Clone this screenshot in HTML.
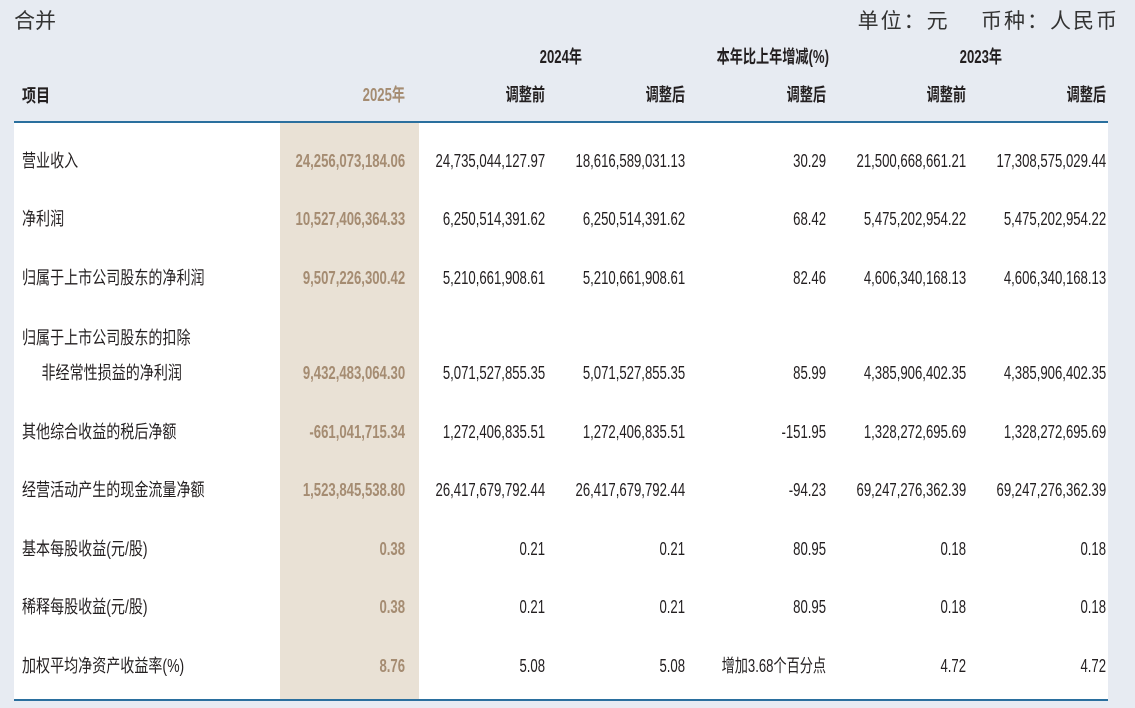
<!DOCTYPE html>
<html><head><meta charset="utf-8"><style>
body{margin:0;width:1135px;height:708px;overflow:hidden;background:#e7ebf2;font-family:"Liberation Sans","Noto Sans CJK SC",sans-serif;color:#231f20;position:relative}
.t{position:absolute;white-space:nowrap;font-size:18px;line-height:20px}
.r{transform:scaleX(0.73);transform-origin:right center;text-align:right}
.l{transform:scaleX(0.78);transform-origin:left center}
.h{font-weight:bold;font-size:18px}
.g{color:#a58c72;font-weight:bold}
</style></head><body>
<div class="t" style="left:14px;top:10px;font-size:21px;line-height:24px;color:#333">合并</div>
<div class="t" style="right:16px;top:10px;font-size:21px;line-height:24px;color:#333;letter-spacing:2px">单位：元&nbsp;&nbsp;&nbsp;&nbsp;币种：人民币</div>
<div style="position:absolute;left:14px;top:123px;width:1094px;height:577px;background:#fff"></div>
<div style="position:absolute;left:280px;top:123px;width:139px;height:577px;background:#e9e1d5"></div>
<div style="position:absolute;left:14px;top:121px;width:1094px;height:2px;background:#2a6f9e"></div>
<div style="position:absolute;left:14px;top:699px;width:1094px;height:2px;background:#2a6f9e"></div>
<div id="c"></div>
<script>
var H=[["2024年",582,57,0],["本年比上年增减(%)",829,57,0],["2023年",1002,57,0],["2025年",405,95,1],["调整前",545,95,0],["调整后",685,95,0],["调整后",826,95,0],["调整前",966,95,0],["调整后",1106,95,0]];
var s='<div class="t h l" style="left:22px;top:86px">项目</div>';
H.forEach(function(h){s+='<div class="t h r'+(h[3]?' g':'')+'" style="right:'+(1135-h[1])+'px;top:'+(h[2]-10)+'px">'+h[0]+'</div>';});
var R=[["营业收入",161,"24,256,073,184.06","24,735,044,127.97","18,616,589,031.13","30.29","21,500,668,661.21","17,308,575,029.44"],
["净利润",219,"10,527,406,364.33","6,250,514,391.62","6,250,514,391.62","68.42","5,475,202,954.22","5,475,202,954.22"],
["归属于上市公司股东的净利润",278,"9,507,226,300.42","5,210,661,908.61","5,210,661,908.61","82.46","4,606,340,168.13","4,606,340,168.13"],
["&nbsp;&nbsp;&nbsp;&nbsp;&nbsp;非经常性损益的净利润",373,"9,432,483,064.30","5,071,527,855.35","5,071,527,855.35","85.99","4,385,906,402.35","4,385,906,402.35"],
["其他综合收益的税后净额",432,"-661,041,715.34","1,272,406,835.51","1,272,406,835.51","-151.95","1,328,272,695.69","1,328,272,695.69"],
["经营活动产生的现金流量净额",490,"1,523,845,538.80","26,417,679,792.44","26,417,679,792.44","-94.23","69,247,276,362.39","69,247,276,362.39"],
["基本每股收益(元/股)",549,"0.38","0.21","0.21","80.95","0.18","0.18"],
["稀释每股收益(元/股)",607,"0.38","0.21","0.21","80.95","0.18","0.18"],
["加权平均净资产收益率(%)",666,"8.76","5.08","5.08","增加3.68个百分点","4.72","4.72"]];
var X=[405,545,685,826,966,1106];
s+='<div class="t l" style="left:22px;top:328px">归属于上市公司股东的扣除</div>';
R.forEach(function(r){s+='<div class="t l" style="left:22px;top:'+(r[1]-10)+'px">'+r[0]+'</div>';
for(var i=0;i<6;i++)s+='<div class="t r'+(i==0?' g':'')+'" style="right:'+(1135-X[i])+'px;top:'+(r[1]-10)+'px">'+r[i+2]+'</div>';});
document.getElementById('c').innerHTML=s;
</script>
</body></html>
